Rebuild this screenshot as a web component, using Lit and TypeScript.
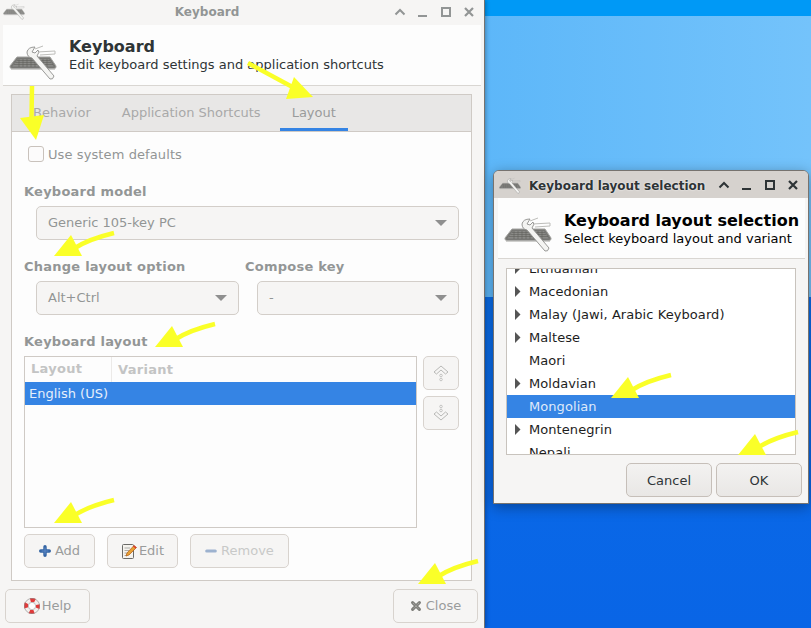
import { LitElement, html, css, svg } from "lit";
import { customElement } from "lit/decorators.js";

const kbIcon = (cls: string) => html`<svg class=${cls} viewBox="0 0 48 36">
  <path d="M8 13 L41 13 L47 22 Q47.5 24.5 45 24.5 L3 24.5 Q0.5 24.5 1 22 Z" fill="#777774" stroke="#a3a3a0" stroke-width="1"/>
  <path d="M9 15 L40 15 L44.5 22.5 L3.5 22.5 Z" fill="#8a8a87"/>
  <path d="M8 16.5 H41 M6.5 18.5 H42 M5 20.5 H44 M10 15 V23 M14 15 V23 M18 15 V23 M22 15 V23 M26 15 V23 M30 15 V23 M34 15 V23 M38 15 V23" stroke="#5f5f5d" stroke-width=".6" fill="none"/>
  <path d="M2 25.3 H46" stroke="#c4c4c1" stroke-width="1"/>
  <path d="M26 5 L34 2 M28 8 L46 7 L46 10 L31 11" fill="none" stroke="#bdbdba" stroke-width="1"/>
  <path d="M26 3 Q19 3 18 8 Q18 13 23 14 L41 35 Q44 36 45 32 L28 12 Q31 8 29 6 L26 9 L23 8 Z" fill="#f4f4f2" stroke="#8e8e8c" stroke-width=".9"/>
</svg>`;

const ctlUp = svg`<path d="M1.5 8.5 L6 4 L10.5 8.5" fill="none" stroke="currentColor" stroke-width="2"/>`;
const ctlMin = svg`<path d="M1 10 H10" fill="none" stroke="currentColor" stroke-width="2"/>`;
const ctlMax = svg`<rect x="2" y="2" width="8" height="8" fill="none" stroke="currentColor" stroke-width="2"/>`;
const ctlX = svg`<path d="M2 2 L10 10 M10 2 L2 10" fill="none" stroke="currentColor" stroke-width="2.2"/>`;

const controls = html`<div class="ctls">
  ${[ctlUp, ctlMin, ctlMax, ctlX].map((c) => html`<svg class="ctl" viewBox="0 0 12 12">${c}</svg>`)}
</div>`;

const caret = html`<svg class="caret" viewBox="0 0 12 6"><path d="M0 0 H12 L6 6 Z" fill="#8f8f8f"/></svg>`;
const tri = html`<svg class="tri" viewBox="0 0 7 11"><path d="M1 0 L6.5 5.5 L1 11 Z" fill="#555"/></svg>`;

const addIcon = html`<svg class="ic" viewBox="0 0 14 14"><path d="M7 2 V12 M2 7 H12" stroke="#3465a4" stroke-width="4" stroke-linecap="round"/><path d="M7 3 V11 M3 7 H11" stroke="#5c88c5" stroke-width="1.2"/></svg>`;
const editIcon = html`<svg class="ic big" viewBox="0 0 16 16"><rect x="1.5" y="1.5" width="11" height="14" rx="1" fill="#f5f3ee" stroke="#6b6b68"/><path d="M3.5 5 H9 M3.5 7.5 H8 M3.5 10 H7 M3.5 12.5 H6" stroke="#9b9b98" stroke-width=".8"/><path d="M5 13 L6 10 L13 2.5 L15.5 4.5 L8 12 Z" fill="#e8a033" stroke="#b05a12" stroke-width=".7"/><path d="M12.5 3 L15 5" stroke="#d33" stroke-width="1.4"/></svg>`;
const removeIcon = html`<svg class="ic" viewBox="0 0 14 14"><path d="M2 7 H12" stroke="#9db2cf" stroke-width="3.6" stroke-linecap="round"/></svg>`;
const helpIcon = html`<svg class="ic big" viewBox="0 0 16 16"><circle cx="8" cy="8" r="6" fill="none" stroke="#f4f0ee" stroke-width="4"/><circle cx="8" cy="8" r="6" fill="none" stroke="#e03a3a" stroke-width="4" stroke-dasharray="4.7 4.7" stroke-dashoffset="2.3"/><circle cx="8" cy="8" r="7.6" fill="none" stroke="#8a8a8a" stroke-width=".6"/><circle cx="8" cy="8" r="3.7" fill="#fff" stroke="#999" stroke-width=".6"/></svg>`;
const closeIcon = html`<svg class="ic" viewBox="0 0 14 14"><path d="M3 3 L11 11 M11 3 L3 11" stroke="#80807c" stroke-width="3.6" stroke-linecap="round"/><path d="M3.5 3.5 L10.5 10.5 M10.5 3.5 L3.5 10.5" stroke="#b5b5b1" stroke-width=".9" stroke-dasharray="1.5 1"/></svg>`;
const upIcon = html`<svg class="arr" viewBox="0 0 18 18"><path d="M2 8 L9 2 L16 8 L13.5 10 L9 6 L4.5 10 Z" fill="none" stroke="#b9b9b7"/><circle cx="9" cy="11.5" r="1.3" fill="none" stroke="#b9b9b7" stroke-width=".8"/><circle cx="9" cy="15.5" r="1.3" fill="none" stroke="#b9b9b7" stroke-width=".8"/></svg>`;
const downIcon = html`<svg class="arr" viewBox="0 0 18 18"><path d="M2 10 L9 16 L16 10 L13.5 8 L9 12 L4.5 8 Z" fill="none" stroke="#b9b9b7"/><circle cx="9" cy="6.5" r="1.3" fill="none" stroke="#b9b9b7" stroke-width=".8"/><circle cx="9" cy="2.5" r="1.3" fill="none" stroke="#b9b9b7" stroke-width=".8"/></svg>`;

const arrows: [number, number][] = [
  [71, 235], [172, 326], [71, 502], [435, 563], [628, 377], [755, 434],
];

const layouts: [string, boolean, boolean][] = [
  ["Lithuanian", true, false],
  ["Macedonian", true, false],
  ["Malay (Jawi, Arabic Keyboard)", true, false],
  ["Maltese", true, false],
  ["Maori", false, false],
  ["Moldavian", true, false],
  ["Mongolian", false, true],
  ["Montenegrin", true, false],
  ["Nepali", false, false],
];

@customElement("app-root")
export class AppRoot extends LitElement {
  static styles = css`
    :host {
      display: block;
      position: relative;
      width: 811px;
      height: 628px;
      overflow: hidden;
      font-family: "DejaVu Sans", sans-serif;
      font-size: 13px;
      color: #2e3436;
      background: #0a6be8;
    }
    .desk { position: absolute; inset: 0; display: flex; flex-direction: column; background: linear-gradient(180deg, #0a71ea, #0965e6); }
    .desk-top { height: 16px; background: #0099f6; }
    .desk-light { height: 281px; background: linear-gradient(90deg, #5db7f9 60%, #74c3fb); }

    .win { position: absolute; box-sizing: border-box; display: flex; flex-direction: column; background: #f6f5f4; }
    .main { left: 0; top: 0; width: 485px; height: 628px; border-right: 1px solid #77736f; box-shadow: 1px 0 4px rgba(0,0,0,.3); }
    .dlg { left: 493px; top: 170px; width: 316px; height: 334px; border: 1px solid #77736f; border-radius: 6px 6px 0 0; box-shadow: 0 3px 14px rgba(0,0,0,.35); }

    .title { display: flex; align-items: center; flex: none; box-sizing: border-box; }
    .main .title { height: 25px; padding: 0 4px 2px 3px; color: #929595; }
    .dlg .title { height: 27px; padding: 1px 5px 0; background: #d6d2ce; border-radius: 5px 5px 0 0; color: #2e3436; }
    .t-icon { width: 22px; height: 17px; flex: none; }
    .main .t-icon { opacity: .85; }
    .t-text { flex: 1; font-weight: 700; font-size: 12px; }
    .main .t-text { text-align: center; padding-right: 5px; }
    .dlg .t-text { padding: 2px 0 0 8px; text-shadow: 0 0 2px #fff; white-space: nowrap; }
    .ctls { display: flex; gap: 11px; flex: none; }
    .main .ctls { margin-right: 5px; }
    .dlg .ctls { margin-right: 4px; }
    .ctl { width: 12px; height: 12px; display: block; }

    .head { display: flex; align-items: center; background: #fdfdfd; border-bottom: 1px solid #d9d6d2; margin: 0 3px; flex: none; box-sizing: border-box; height: 61px; }
    .dlg .head { margin: 0 3px 0 4px; }
    .h-text { padding-top: 2px; }
    .dlg .h-text { padding-top: 4px; }
    .h-icon { width: 48px; height: 36px; flex: none; margin: 14px 12px 0 6px; }
    .dlg .h-icon { margin-top: 11px; }
    .h-title { font-size: 16px; font-weight: 700; line-height: 18px; }
    .h-sub { line-height: 18px; }
    .dlg .h-title, .dlg .h-sub { color: #000; white-space: nowrap; }

    .nb { margin: 8px 12px 0 11px; height: 487px; box-sizing: border-box; border: 1px solid #cfcac5; background: #fdfdfd; display: flex; flex-direction: column; color: #929595; }
    .tabs { height: 37px; box-sizing: border-box; background: #e8e7e6; border-bottom: 1px solid #cfcac5; display: flex; gap: 7px; padding-left: 9px; flex: none; }
    .tab { padding: 0 12px; line-height: 36px; color: #a8a9a9; height: 36px; box-sizing: border-box; }
    .tab.on { border-bottom: 3px solid #3584e4; color: #9a9b9b; }

    .pane { padding: 14px 12px 0; display: flex; flex-direction: column; position: relative; flex: 1; }
    .check { display: flex; align-items: center; gap: 4px; height: 16px; margin-left: 4px; letter-spacing: .1px; }
    .box { width: 14px; height: 14px; border: 1px solid #c9c2bc; border-radius: 3px; background: #fcfbfb; }
    .lab { font-weight: 700; color: #939696; line-height: 16px; white-space: nowrap; letter-spacing: .24px; }
    .combo { height: 34px; box-sizing: border-box; border: 1px solid #d3cec9; border-radius: 5px; background: #f6f5f4; display: flex; align-items: center; justify-content: space-between; padding: 0 11px 1px; color: #929595; }
    .caret { width: 12px; height: 6px; margin-top: 1px; }
    .sec-model { margin-top: 22px; }
    .indent { margin: 6px 0 0 12px; }
    .two { display: grid; grid-template-columns: 215px 214px; gap: 6px; margin-top: 19px; }
    .sec-layout { margin-top: 19px; }

    .lay { display: flex; gap: 6px; margin-top: 6px; height: 172px; }
    .tree { width: 393px; box-sizing: border-box; border: 1px solid #cfcac5; background: #fdfdfd; flex: none; }
    .tree-h { display: flex; height: 25px; align-items: center; font-weight: 700; color: #c3c4c4; letter-spacing: .3px; }
    .tree-h span:first-child { width: 87px; box-sizing: border-box; padding: 0 0 1px 6px; border-right: 1px solid #eceae8; line-height: 24px; }
    .tree-h span:last-child { padding: 0 0 1px 6px; }
    .tree-sel { height: 23px; line-height: 23px; background: #3584e4; color: #e6effb; padding-left: 4px; }
    .side { display: flex; flex-direction: column; gap: 6px; }
    .side .btn { width: 36px; padding: 0; }
    .arr { width: 18px; height: 18px; }

    .btn { height: 34px; box-sizing: border-box; border: 1px solid #d8d3ce; border-radius: 5px; background: #f6f5f4; display: flex; align-items: center; justify-content: center; gap: 4px; color: #9a9c9c; padding-bottom: 1px; }
    .btn.off { color: #c8c9c8; }
    .ic { width: 12px; height: 12px; flex: none; }
    .ic.big { width: 16px; height: 16px; margin-right: -2px; }
    .acts { display: flex; gap: 12px; margin-top: 6px; }
    .w71 { width: 71px; }
    .w99 { width: 99px; }
    .foot { display: flex; justify-content: space-between; margin: 8px 6px 0 5px; }
    .w85 { width: 85px; }

    .list { margin: 9px 12px 0 12px; height: 187px; box-sizing: border-box; border: 1px solid #c8c3bd; background: #fff; overflow: hidden; flex: none; }
    .rows { margin-top: -12px; }
    .row { height: 23px; display: flex; align-items: center; color: #1d1d1d; letter-spacing: .07px; }
    .row.sel { background: #3584e4; color: #dfeafa; }
    .tw { width: 22px; padding-left: 7px; box-sizing: border-box; flex: none; display: flex; }
    .tri { width: 7px; height: 11px; }
    .dacts { display: flex; justify-content: flex-end; gap: 4px; margin: 8px 6px 0 0; }
    .dacts .btn { width: 86px; padding-bottom: 0; background: linear-gradient(#f3f2f1, #e9e7e5); border-color: #c6bfb9; color: #2e3436; }

    .marks { position: absolute; inset: 0; width: 811px; height: 628px; pointer-events: none; }
  `;

  render() {
    return html`
      <div class="desk"><div class="desk-top"></div><div class="desk-light"></div></div>

      <section class="win main">
        <div class="title">${kbIcon("t-icon")}<div class="t-text">Keyboard</div>${controls}</div>
        <div class="head">
          ${kbIcon("h-icon")}
          <div class="h-text"><div class="h-title">Keyboard</div><div class="h-sub">Edit keyboard settings and application shortcuts</div></div>
        </div>
        <div class="nb">
          <div class="tabs">
            <div class="tab">Behavior</div>
            <div class="tab">Application Shortcuts</div>
            <div class="tab on">Layout</div>
          </div>
          <div class="pane">
            <div class="check"><div class="box"></div><span>Use system defaults</span></div>
            <div class="lab sec-model">Keyboard model</div>
            <div class="combo indent"><span>Generic 105-key PC</span>${caret}</div>
            <div class="two">
              <div><div class="lab">Change layout option</div><div class="combo indent"><span>Alt+Ctrl</span>${caret}</div></div>
              <div><div class="lab">Compose key</div><div class="combo indent"><span>-</span>${caret}</div></div>
            </div>
            <div class="lab sec-layout">Keyboard layout</div>
            <div class="lay">
              <div class="tree">
                <div class="tree-h"><span>Layout</span><span>Variant</span></div>
                <div class="tree-sel">English (US)</div>
              </div>
              <div class="side">
                <div class="btn">${upIcon}</div>
                <div class="btn">${downIcon}</div>
              </div>
            </div>
            <div class="acts">
              <div class="btn w71">${addIcon}<span>Add</span></div>
              <div class="btn w71">${editIcon}<span>Edit</span></div>
              <div class="btn w99 off">${removeIcon}<span>Remove</span></div>
            </div>
          </div>
        </div>
        <div class="foot">
          <div class="btn w85">${helpIcon}<span>Help</span></div>
          <div class="btn w85">${closeIcon}<span>Close</span></div>
        </div>
      </section>

      <section class="win dlg">
        <div class="title">${kbIcon("t-icon")}<div class="t-text">Keyboard layout selection</div>${controls}</div>
        <div class="head">
          ${kbIcon("h-icon")}
          <div class="h-text"><div class="h-title">Keyboard layout selection</div><div class="h-sub">Select keyboard layout and variant</div></div>
        </div>
        <div class="list"><div class="rows">
          ${layouts.map(([n, t, s]) => html`<div class="row ${s ? "sel" : ""}"><span class="tw">${t ? tri : ""}</span><span>${n}</span></div>`)}
        </div></div>
        <div class="dacts">
          <div class="btn">Cancel</div>
          <div class="btn">OK</div>
        </div>
      </section>

      <svg class="marks" viewBox="0 0 811 628">
        <path d="M32 86 L31.5 118" stroke="#faff28" stroke-width="4.5" fill="none"/>
        <path d="M20 118 L44 115 L36 140 Z" fill="#faff28"/>
        <path d="M248 63 L298 90" stroke="#faff28" stroke-width="4.5" fill="none"/>
        <path d="M294 77 L313 97 L286 99 Z" fill="#faff28"/>
        ${arrows.map(([x, y]) => svg`<g transform="translate(${x} ${y})">
          <path d="M4 13 Q18 4 43 -2" stroke="#faff28" stroke-width="4.5" fill="none"/>
          <path d="M0 0 L11 21 L-17 21 Z" fill="#faff28"/>
        </g>`)}
      </svg>
    `;
  }
}
